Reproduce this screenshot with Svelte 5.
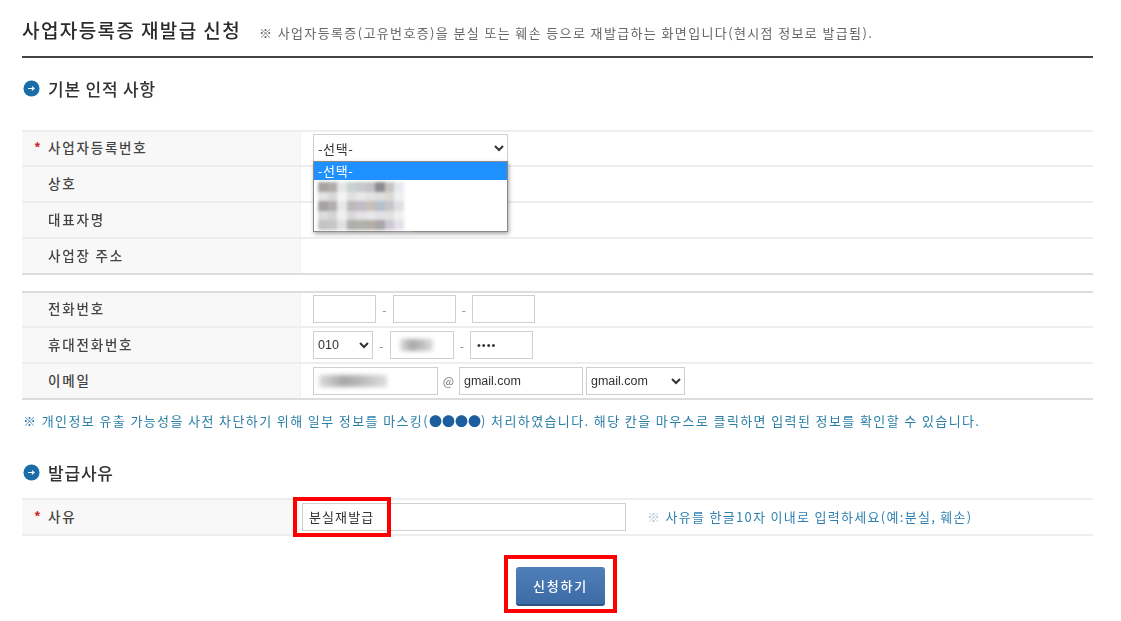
<script>
  const basicRows = [
    { label: '사업자등록번호', required: true },
    { label: '상호' },
    { label: '대표자명' },
    { label: '사업장 주소' }
  ]
  // mosaic cells that stand in for the blurred company names
  const mosaic = [
    ['#a9a4a4', '#b0acac', '#e6e6e6', '#c9d2ce', '#c6c8ca', '#c2c2c6', '#8e8c90', '#c8c4c0', '#e6eaee', '#fff'],
    ['#e4e4e4', '#d8d8d8', '#f4f4f4', '#e0e0e0', '#e8e8e8', '#e2e2e2', '#dedede', '#dcd8d4', '#eef0f2', '#fff'],
    ['#a4a2a4', '#b2aeb0', '#e8e8e8', '#bcb8bc', '#c0bcc4', '#c8c0b8', '#b4c0cc', '#c8c6c6', '#dde0e2', '#fff'],
    ['#dcdcdc', '#d4d4d4', '#f0f0f0', '#d8d8da', '#e4e2e4', '#e8e8e8', '#e2e2e4', '#e2e2e0', '#f0f0f0', '#fff'],
    ['#c4c2c2', '#c8c6c6', '#e0e0e0', '#aeaeaa', '#b0b0ac', '#b4aea4', '#a8a6a8', '#cec8d6', '#e4e0ea', '#fff']
  ]
</script>

<div class="page">
  <header class="title">
    <h1>사업자등록증 재발급 신청</h1>
    <p>※ 사업자등록증(고유번호증)을 분실 또는 훼손 등으로 재발급하는 화면입니다(현시점 정보로 발급됨).</p>
  </header>

  <h2 class="section first">
    <svg viewBox="0 0 18 18" width="17" height="17" aria-hidden="true">
      <circle cx="9" cy="9" r="8.5" fill="#1b6ca8" />
      <path d="M5.5 9h6M9.5 7l2.2 2-2.2 2" fill="none" stroke="#fff" stroke-width="1.2" />
    </svg>
    기본 인적 사항
  </h2>

  <div class="table">
    {#each basicRows as row, i}
      <div class="row">
        <div class="label">{#if row.required}<span class="star">*</span>{/if}{row.label}</div>
        <div class="cell">
          {#if i === 0}
            <div class="picker">
              <select class="field select-main">
                <option>-선택-</option>
              </select>
              <div class="dropdown">
                <div class="picked">-선택-</div>
                <div class="blurred">
                  {#each mosaic as line}
                    {#each line as color}
                      <i style="background:{color}"></i>
                    {/each}
                  {/each}
                </div>
              </div>
            </div>
          {/if}
        </div>
      </div>
    {/each}
  </div>

  <div class="table second">
    <div class="row">
      <div class="label">전화번호</div>
      <div class="cell">
        <input class="field w63" />
        <span class="dash">-</span>
        <input class="field w63" />
        <span class="dash">-</span>
        <input class="field w63" />
      </div>
    </div>
    <div class="row">
      <div class="label">휴대전화번호</div>
      <div class="cell">
        <select class="field w60 latin"><option>010</option></select>
        <span class="dash">-</span>
        <div class="field w64 masked"><i class="smudge short"></i></div>
        <span class="dash">-</span>
        <div class="field w63 dots">••••</div>
      </div>
    </div>
    <div class="row">
      <div class="label">이메일</div>
      <div class="cell">
        <div class="field w125 masked"><i class="smudge long"></i></div>
        <span class="at">@</span>
        <input class="field w124 latin" value="gmail.com" />
        <select class="field w99 latin"><option>gmail.com</option></select>
      </div>
    </div>
  </div>

  <p class="notice">※ 개인정보 유출 가능성을 사전 차단하기 위해 일부 정보를 마스킹(<span class="ball">●●●●</span>) 처리하였습니다. 해당 칸을 마우스로 클릭하면 입력된 정보를 확인할 수 있습니다.</p>

  <h2 class="section">
    <svg viewBox="0 0 18 18" width="17" height="17" aria-hidden="true">
      <circle cx="9" cy="9" r="8.5" fill="#1b6ca8" />
      <path d="M5.5 9h6M9.5 7l2.2 2-2.2 2" fill="none" stroke="#fff" stroke-width="1.2" />
    </svg>
    발급사유
  </h2>

  <div class="table reason">
    <div class="row">
      <div class="label"><span class="star">*</span>사유</div>
      <div class="cell">
        <div class="reason-input">
          <input class="field w324" value="분실재발급" />
          <span class="mark mark-input"></span>
        </div>
        <span class="hint"><span class="ref">※</span> 사유를 한글10자 이내로 입력하세요(예:분실, 훼손)</span>
      </div>
    </div>
  </div>

  <div class="actions">
    <div class="submit-wrap">
      <button class="submit">신청하기</button>
      <span class="mark mark-button"></span>
    </div>
  </div>
</div>

<style>
  :global(body) {
    background: #fff;
    overflow: hidden;
  }

  .page {
    width: 1071px;
    height: 621px;
    padding-left: 22px;
    font-family: "Noto Sans CJK KR", "Liberation Sans", sans-serif;
    color: #333;
    filter: blur(0.45px);
    overflow: hidden;
  }

  .title {
    display: flex;
    align-items: baseline;
    gap: 18px;
    border-bottom: 2px solid #444;
    padding-top: 17px;
    box-sizing: border-box;
    height: 58px;
  }

  h1 {
    margin: 0;
    font-size: 19px;
    line-height: 26px;
    font-weight: 500;
    letter-spacing: 1.4px;
    color: #2b2b2b;
  }

  .title p {
    margin: 0;
    font-size: 13px;
    letter-spacing: 1.37px;
    color: #666;
    white-space: nowrap;
  }

  .section {
    display: flex;
    align-items: center;
    gap: 8px;
    margin: 0;
    height: 26px;
    font-size: 17px;
    font-weight: 500;
    letter-spacing: 0.8px;
    color: #333;
  }

  .section svg {
    margin-left: 1px;
  }

  .section.first {
    margin-top: 17px;
  }

  .table {
    border-top: 2px solid #eee;
  }

  .section.first + .table {
    margin-top: 28.5px;
  }

  .table.second {
    border-top: 2px solid #ddd;
    margin-top: 16px;
  }

  .table.second .row:last-child,
  .table:first-of-type .row:last-child {
    border-bottom-color: #ddd;
  }

  .row {
    display: flex;
    height: 35.75px;
    box-sizing: border-box;
    border-bottom: 2px solid #eee;
  }

  .label {
    position: relative;
    width: 278px;
    box-sizing: border-box;
    padding: 0 0 2px 26px;
    display: flex;
    align-items: center;
    background: #f8f8f8;
    font-size: 13.5px;
    font-weight: 500;
    letter-spacing: 1.8px;
    color: #444;
    white-space: pre;
  }

  .star {
    position: absolute;
    left: 12px;
    color: #d2232a;
    font-weight: 700;
  }

  .cell {
    flex: 1;
    display: flex;
    align-items: center;
    padding-left: 12px;
    border-left: 1px solid #f2f2f2;
  }

  .field {
    box-sizing: border-box;
    height: 28px;
    border: 1px solid #cfcfcf;
    background: #fff;
    padding: 0 4px;
    font-family: "Liberation Sans", "Noto Sans CJK KR", sans-serif;
    font-size: 12.5px;
    color: #333;
    border-radius: 0;
    outline: none;
    margin: 0;
  }

  select.field {
    padding-left: 0;
  }

  .w60 { width: 60px; }
  .w63 { width: 63px; }
  .w64 { width: 64px; }
  .w125 { width: 125px; }
  .w124 { width: 124px; }
  .w99 { width: 99px; margin-left: 3px; }

  .w324 {
    width: 324px;
    font-family: "Noto Sans CJK KR", sans-serif;
    font-size: 13px;
    letter-spacing: 1.1px;
    padding-left: 6px;
  }

  .dash {
    width: 16.5px;
    text-align: center;
    color: #888;
    font-size: 12px;
  }

  .at {
    width: 21px;
    text-align: center;
    color: #777;
    font-size: 12px;
  }

  .masked {
    position: relative;
    overflow: hidden;
  }

  .dots {
    display: flex;
    align-items: center;
    font-size: 11px;
    padding-left: 6px;
    letter-spacing: 1px;
    color: #333;
  }

  .smudge {
    position: absolute;
    top: 7px;
    height: 12px;
    background: linear-gradient(90deg, #ddd, #a8a8a8 35%, #b8b8b8 60%, #ddd);
    filter: blur(2px);
  }

  .smudge.short { left: 9px; width: 33px; }
  .smudge.long { left: 5px; width: 68px; }

  .picker {
    position: relative;
  }

  .select-main {
    width: 195px;
    font-family: "Noto Sans CJK KR", sans-serif;
    font-size: 13px;
    letter-spacing: 0.6px;
  }

  .dropdown {
    position: absolute;
    top: 27px;
    left: 0;
    width: 195px;
    height: 71px;
    box-sizing: border-box;
    background: #fff;
    border: 1px solid #888;
    box-shadow: 1px 2px 4px rgba(0, 0, 0, 0.35);
    z-index: 2;
  }

  .picked {
    height: 18px;
    line-height: 18px;
    padding-left: 4px;
    background: #1e90ff;
    color: #fff;
    font-size: 13px;
    letter-spacing: 0.6px;
  }

  .blurred {
    display: grid;
    grid-template-columns: repeat(10, 9.5px);
    grid-auto-rows: 9.5px;
    margin: 2px 0 0 4px;
    width: 95px;
    filter: blur(1.5px);
  }

  .notice {
    margin: 12px 0 0 1px;
    height: 18px;
    line-height: 18px;
    font-size: 13px;
    letter-spacing: 1.39px;
    color: #2a7fa8;
    white-space: nowrap;
  }

  .ball {
    color: #1d5f9e;
    letter-spacing: 0;
  }

  .notice + .section {
    margin-top: 30px;
  }

  .table.reason {
    margin-top: 12px;
  }

  .reason .cell {
    padding-left: 2px;
    border-left: none;
  }

  .reason-input,
  .submit-wrap {
    position: relative;
    display: flex;
  }

  .hint {
    margin-left: 21px;
    font-size: 13px;
    letter-spacing: 1.3px;
    color: #2f80b0;
    white-space: nowrap;
  }

  .ref {
    color: #a9c6da;
  }

  .mark {
    position: absolute;
    box-sizing: border-box;
    border: 4px solid #f00;
  }

  .mark-input {
    left: -9px;
    top: -6px;
    width: 98px;
    height: 40px;
  }

  .actions {
    display: flex;
    justify-content: center;
    margin-top: 31.5px;
    padding-left: 6px;
  }

  .submit {
    width: 89px;
    height: 39px;
    border: none;
    border-bottom: 2px solid #2c5288;
    border-radius: 3px;
    background: linear-gradient(#4f7fb8, #3c6ba6);
    color: #fff;
    font-family: "Noto Sans CJK KR", sans-serif;
    font-size: 13px;
    font-weight: 500;
    letter-spacing: 1.8px;
    padding: 0;
  }

  .mark-button {
    left: -12px;
    top: -12px;
    width: 113px;
    height: 58px;
  }
</style>
